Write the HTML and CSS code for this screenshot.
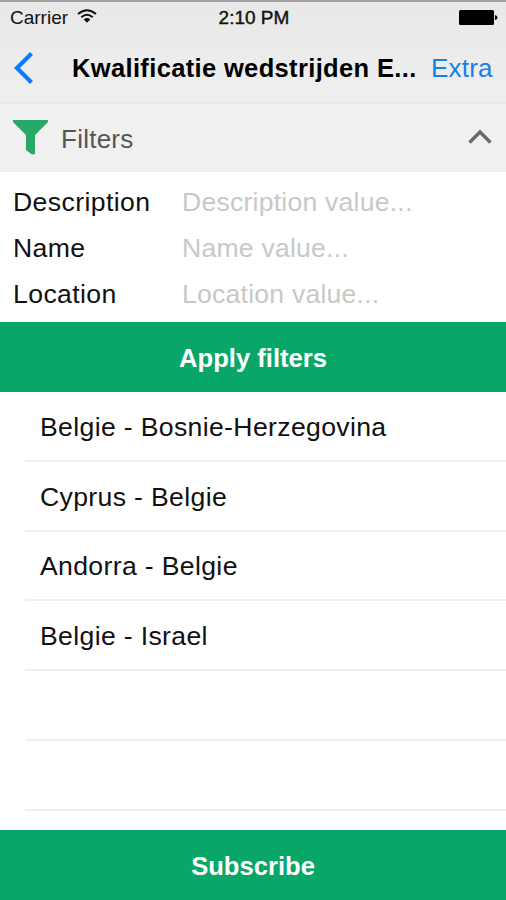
FILE: index.html
```html
<!DOCTYPE html>
<html lang="nl">
<head>
<meta charset="utf-8">
<title>Kwalificatie wedstrijden</title>
<link rel="stylesheet" href="styles.css">
</head>
<body>
<main class="screen">
  <header class="top">
    <div class="status">
      <div class="carrier"><span>Carrier</span>
        <svg width="20" height="14" viewBox="0 0 20 14"><path d="M1 5Q10-2.6 19 5M4.3 8.2Q10 3.2 15.7 8.2" fill="none" stroke="#111" stroke-width="1.9"/><path d="M6.7 10.4Q10 7.6 13.3 10.4L10 13.7Z" fill="#111"/></svg>
      </div>
      <span class="time">2:10 PM</span>
      <svg class="battery" width="39" height="15" viewBox="0 0 39 15"><rect width="35" height="15" rx="1.5"/><path d="M36 5Q38.5 5.5 38.5 7.5T36 10Z"/></svg>
    </div>
    <nav class="nav">
      <svg class="back" width="22" height="34" viewBox="0 0 22 34"><path d="M19.500 2.500L5 17L19.500 31.500" fill="none" stroke="#087cff" stroke-width="4.200"/></svg>
      <h1 class="title">Kwalificatie wedstrijden E...</h1>
      <a class="extra">Extra</a>
    </nav>
  </header>
  <section class="filter-head">
    <svg width="36" height="36" viewBox="0 0 36 36"><path d="M0 0H35V2L22 15V34L19 34.500L13 30V15L0 2Z" fill="#27a866"/></svg>
    <h2>Filters</h2>
    <svg class="chevron" width="24" height="16" viewBox="0 0 24 16"><path d="M1.500 13.500L12 3L22.500 13.500" fill="none" stroke="#6b6b6b" stroke-width="3.400"/></svg>
  </section>
  <form class="fields">
    <label><span class="name">Description</span><span class="value">Description value...</span></label>
    <label><span class="name">Name</span><span class="value">Name value...</span></label>
    <label><span class="name">Location</span><span class="value">Location value...</span></label>
  </form>
  <div class="button">Apply filters</div>
  <ul class="matches">
    <li>Belgie - Bosnie-Herzegovina</li>
    <li>Cyprus - Belgie</li>
    <li>Andorra - Belgie</li>
    <li>Belgie - Israel</li>
    <li></li>
    <li></li>
  </ul>
  <div class="button">Subscribe</div>
</main>
</body>
</html>
```
FILE: styles.css
```css
*{box-sizing:border-box}
body{margin:0;font-family:"Liberation Sans",sans-serif;color:#111;background:#fff}
svg{display:block;flex:none}
.screen{width:506px;height:900px;display:flex;flex-direction:column;overflow:hidden;font-size:26.6px}
.top{height:104px;background:linear-gradient(#e8e8e8,#efefef);border-top:2px solid #a0a0a0;border-bottom:2px solid #e8e8e8;flex:none}
.status{height:31px;display:grid;grid-template-columns:1fr auto 1fr;align-items:center;padding:0 8px 0 10px;font-size:19px}
.carrier{display:flex;align-items:center;gap:9px}
.carrier svg{margin-top:-3px}
.time{-webkit-text-stroke:.4px #111}
.battery{justify-self:end}
.nav{height:69px;display:flex;align-items:center;padding:2px 13px 0 12px}
.back{margin-top:-2px}
.title{margin:0 0 0 38px;font-size:25.5px;font-weight:700;color:#000;white-space:nowrap;width:359px;letter-spacing:.35px}
.extra{color:#1a7ee6;white-space:nowrap;font-size:26px;letter-spacing:.2px}
.filter-head{height:68px;flex:none;background:#f0f0f0;display:flex;align-items:center;padding:0 14px 0 13px;color:#555}
.filter-head h2{margin:2px auto 0 12px;font-size:26px;font-weight:400;letter-spacing:.25px}
.chevron{margin-top:-2px}
.fields{height:150px;flex:none;padding:7px 0 5px 13px}
.fields label{display:flex;height:46px;align-items:center}
.name{width:169px;letter-spacing:.4px}
.value{color:#c8c8c8;letter-spacing:.22px}
.button{display:flex;align-items:center;justify-content:center;background:#08a768;color:#fff;height:70px;flex:none;font-size:25.6px;font-weight:700;padding-top:2px}
.matches{list-style:none;margin:0;padding:0 0 0 25px;height:438px;flex:none;letter-spacing:.35px}
.matches li{height:69.8px;border-bottom:2px solid #efefef;padding:3px 0 0 15px;display:flex;align-items:center;white-space:nowrap}
```
